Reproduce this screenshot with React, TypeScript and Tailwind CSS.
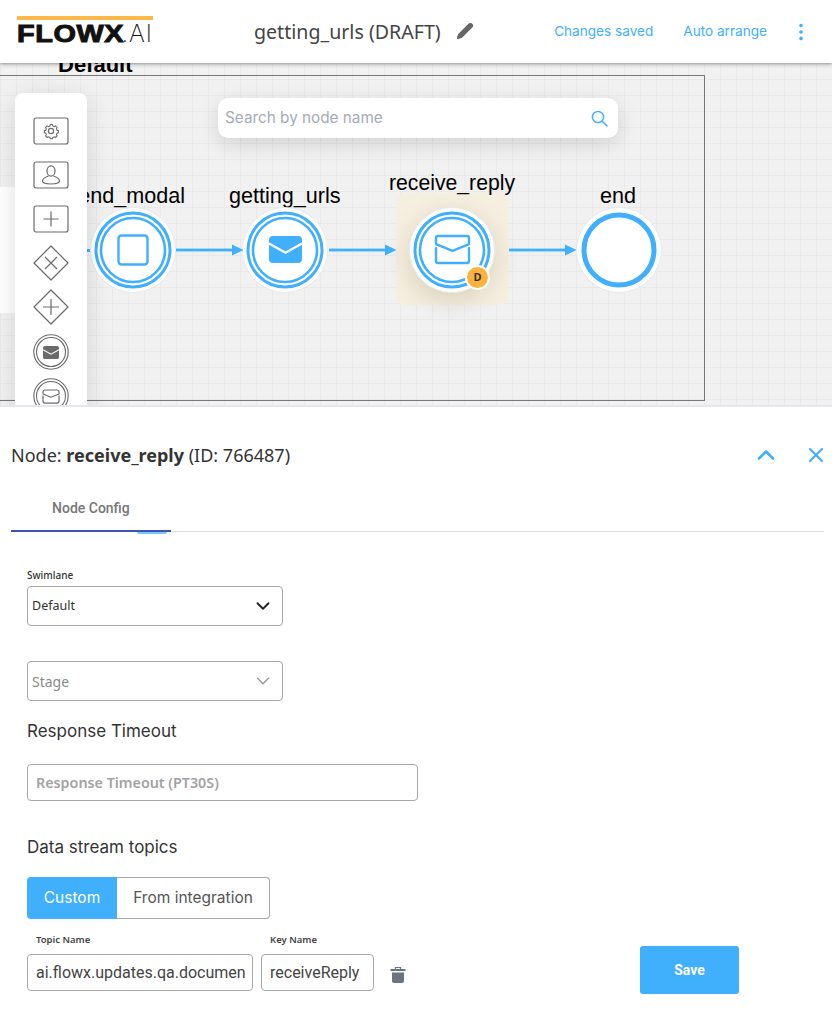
import React from 'react';
import { ChevronDown, ChevronUp, EllipsisVertical, Pencil, X } from 'lucide-react';

const inter = "font-['Inter',sans-serif]";
const noto = "font-['Noto_Sans',sans-serif]";
const roboto = "font-['Roboto',sans-serif]";

const MailFilled = ({ x, y, w, fill }: { x: number; y: number; w: number; fill: string }) => {
    const h = w * 0.82;
    return (
        <g>
            <rect x={x} y={y} width={w} height={h} rx={w * 0.12} fill={fill} />
            <path d={`M${x} ${y + h * 0.28} L${x + w / 2} ${y + h * 0.62} L${x + w} ${y + h * 0.28}`} fill="none" stroke="#fff" strokeWidth={w * 0.07} />
        </g>
    );
};

const MailOutline = ({ x, y, w, stroke, sw }: { x: number; y: number; w: number; stroke: string; sw: number }) => {
    const h = w * 0.82;
    return (
        <g fill="none" stroke={stroke} strokeWidth={sw} strokeLinejoin="round" strokeLinecap="round">
            <path d={`M${x} ${y + h * 0.45} V${y + h - 2} a2 2 0 0 0 2 2 H${x + w - 2} a2 2 0 0 0 2 -2 V${y + h * 0.45}`} />
            <path d={`M${x} ${y + h * 0.3} V${y + 2} a2 2 0 0 1 2 -2 H${x + w - 2} a2 2 0 0 1 2 2 V${y + h * 0.3} L${x + w / 2} ${y + h * 0.55} Z`} />
        </g>
    );
};

const NodeRing = ({ children, single }: { children?: React.ReactNode; single?: boolean }) => (
    <svg width="86" height="86" viewBox="0 0 86 86" className="block">
        <circle cx="43" cy="43" r="42.5" fill="#fff" stroke="#e8e8e8" strokeWidth="1" />
        {single ? (
            <circle cx="43" cy="43" r="35" fill="#fff" stroke="#40affc" strokeWidth="5" />
        ) : (
            <>
                <circle cx="43" cy="43" r="37" fill="none" stroke="#40affc" strokeWidth="3" />
                <circle cx="43" cy="43" r="32" fill="none" stroke="#40affc" strokeWidth="2.6" />
            </>
        )}
        {children}
    </svg>
);

const Arrow = () => (
    <svg width="68" height="14" viewBox="0 0 68 14" className="block">
        <rect x="0" y="5.6" width="57" height="2.8" fill="#40affc" />
        <path d="M56 1.5 L67.5 7 L56 12.5 Z" fill="#40affc" />
    </svg>
);

const Toolbar = () => (
    <div className="absolute left-[15px] top-[30px] w-[72px] h-[330px] bg-white rounded-lg shadow-[0_4px_24px_rgba(0,0,0,0.12)] flex flex-col items-center pt-[24px] z-10">
        <svg width="36" height="28" viewBox="0 0 36 28" fill="none" stroke="#6b6b6b" strokeWidth="1.2" className="shrink-0">
            <rect x="1" y="1" width="34" height="26" rx="2" strokeWidth="1.2" />
            <path d="M18 6.5l1.6.4.5 1.6 1.5.7 1.5-.8 1.7 1.7-.8 1.5.7 1.5 1.5.5v2.4l-1.5.5-.7 1.5.8 1.5-1.7 1.7-1.5-.8-1.5.7-.5 1.5h-2.4l-.5-1.5-1.5-.7-1.5.8-1.7-1.7.8-1.5-.7-1.5-1.5-.5v-2.4l1.5-.5.7-1.5-.8-1.5 1.7-1.7 1.5.8 1.5-.7.5-1.6z" transform="translate(1.8 1.4) scale(.9)" />
            <circle cx="18" cy="14" r="2.6" />
        </svg>
        <svg width="36" height="28" viewBox="0 0 36 28" fill="none" stroke="#6b6b6b" strokeWidth="1.2" className="mt-[16px] shrink-0">
            <rect x="1" y="1" width="34" height="26" rx="2" strokeWidth="1.2" />
            <ellipse cx="18" cy="10" rx="4" ry="5.2" />
            <path d="M15.5 15c-3 1-6 2.5-6 5 0 2 3 3 8.500 3s8.500-1 8.500-3c0-2.500-3-4-6-5" />
        </svg>
        <svg width="36" height="28" viewBox="0 0 36 28" fill="none" stroke="#6b6b6b" strokeWidth="1.2" className="mt-[16px] shrink-0">
            <rect x="1" y="1" width="34" height="26" rx="2" strokeWidth="1.2" />
            <path d="M18 6.500v15M10.500 14h15" />
        </svg>
        <svg width="36" height="36" viewBox="0 0 36 36" fill="none" stroke="#6b6b6b" strokeWidth="1.2" className="mt-[12px] shrink-0">
            <path d="M18 1 L35 18 L18 35 L1 18 Z" strokeLinejoin="round" />
            <path d="M12 12 L24 24 M24 12 L12 24" />
        </svg>
        <svg width="36" height="36" viewBox="0 0 36 36" fill="none" stroke="#6b6b6b" strokeWidth="1.2" className="mt-[8px] shrink-0">
            <path d="M18 1 L35 18 L18 35 L1 18 Z" strokeLinejoin="round" />
            <path d="M18 10 V26 M10 18 H26" />
        </svg>
        <svg width="36" height="36" viewBox="0 0 36 36" className="mt-[9px] shrink-0">
            <circle cx="18" cy="18" r="17.200" fill="none" stroke="#6b6b6b" strokeWidth="1.1" />
            <circle cx="18" cy="18" r="14.500" fill="none" stroke="#6b6b6b" strokeWidth="1.1" />
            <MailFilled x={10} y={12} w={16} fill="#6b6b6b" />
        </svg>
        <svg width="36" height="36" viewBox="0 0 36 36" className="mt-[8px] shrink-0">
            <circle cx="18" cy="18" r="17.200" fill="none" stroke="#6b6b6b" strokeWidth="1.1" />
            <circle cx="18" cy="18" r="14.500" fill="none" stroke="#6b6b6b" strokeWidth="1.1" />
            <MailOutline x={10} y={12} w={16} stroke="#6b6b6b" sw={1.2} />
        </svg>
    </div>
);

const Canvas = () => (
    <div className="relative h-[344px] overflow-hidden bg-[#f1f1f1] bg-[linear-gradient(#e9e9e9_1px,transparent_1px),linear-gradient(90deg,#e9e9e9_1px,transparent_1px)] bg-[length:16px_16px] border-b-2 border-[#e6e6ec] font-['Liberation_Sans',sans-serif] text-black">
        <div className="absolute -left-[10px] top-[12px] w-[715px] h-[326px] border border-[#777]" />
        <div className="absolute left-[58px] -top-[11px] text-[22px] font-bold leading-[26px]">Default</div>
        <div className="absolute left-0 top-[124px] w-[20px] h-[126px] bg-white" />

        <div className="absolute right-[647px] top-[120px] text-[21.6px] leading-[26px] whitespace-nowrap">send_modal</div>

        <Toolbar />

        <div className="absolute left-[218px] top-[35px] w-[400px] h-[40px] bg-white rounded-[10px] shadow-[0_6px_20px_rgba(0,0,0,0.13)] flex items-center justify-between pl-[7px] pr-[10px] z-10">
            <span className={`${inter} text-[15.3px] text-[#a5abb9]`}>Search by node name</span>
            <svg width="17" height="17" viewBox="0 0 17 17" fill="none" stroke="#40affc" strokeWidth="1.5" strokeLinecap="round">
                <circle cx="7" cy="7" r="5.600" />
                <path d="M11 11 L16 16" />
            </svg>
        </div>

        <div className="absolute left-[396px] top-[130px] w-[112px] h-[112px] rounded-[8px] bg-[#f5efe0]" />

        <div className="absolute left-[229px] top-[120px] text-[21.6px] leading-[26px]">getting_urls</div>
        <div className="absolute left-[389px] top-[107px] text-[21.2px] leading-[26px]">receive_reply</div>
        <div className="absolute left-[600px] top-[120px] text-[21.6px] leading-[26px]">end</div>

        <div className="absolute left-[87px] top-[186px] w-[3px] h-[3px] bg-[#40affc]" />

        <div className="absolute left-[90px] top-[144px]">
            <NodeRing>
                <rect x="28.500" y="28.500" width="29" height="29" rx="3" fill="none" stroke="#40affc" strokeWidth="2.400" />
            </NodeRing>
        </div>
        <div className="absolute left-[242px] top-[144px]">
            <NodeRing>
                <MailFilled x={27} y={29} w={33} fill="#40affc" />
            </NodeRing>
        </div>
        <div className="absolute left-[409px] top-[144px] rounded-full shadow-[0_8px_24px_rgba(100,70,20,0.18)]">
            <NodeRing>
                <MailOutline x={27} y={29} w={33} stroke="#40affc" sw={2.400} />
            </NodeRing>
            <div className={`absolute left-[56px] top-[58px] w-[25px] h-[25px] rounded-full bg-[#fdb23c] border-2 border-white flex items-center justify-center text-[11px] font-bold text-[#333] ${noto}`}>D</div>
        </div>
        <div className="absolute left-[576px] top-[144px]">
            <NodeRing single />
        </div>

        <div className="absolute left-[176px] top-[180px]"><Arrow /></div>
        <div className="absolute left-[329px] top-[180px]"><Arrow /></div>
        <div className="absolute left-[509px] top-[180px]"><Arrow /></div>
    </div>
);

const SelectBox = ({ value, muted }: { value: string; muted?: boolean }) => (
    <div className={`w-[256px] h-[40px] border border-[#a8a8a8] rounded-[4px] flex items-center justify-between pl-[4px] pr-[8px] ${noto} ${muted ? 'text-[14px] text-[#8a8a8a]' : 'text-[12.500px] text-[#333]'}`}>
        <span>{value}</span>
        <ChevronDown size={22} strokeWidth={muted ? 1.600 : 2} className={muted ? 'text-[#9a9a9a]' : 'text-[#222]'} />
    </div>
);

export default function App() {
    return (
        <div className="w-[832px] h-[1016px] bg-white overflow-hidden flex flex-col">
            <header className="relative z-20 h-[63px] shrink-0 bg-white shadow-[0_1px_4px_rgba(0,0,0,0.4)] flex items-center">
                <div className="ml-[17px] w-[136px] shrink-0 flex flex-col">
                    <div className="h-[4px] bg-[#fdb848]" />
                    <div className="h-[27px] mt-[1px] flex items-center justify-between text-[#111] font-['Liberation_Sans',sans-serif] leading-none whitespace-nowrap overflow-hidden">
                        <span className="text-[24px] font-black tracking-[0.5px] [-webkit-text-stroke:1px_#111] scale-x-[1.2] origin-left">FLOWX</span>
                        <span className="text-[24px] font-['Inter',sans-serif] font-extralight tracking-[1px]">.AI</span>
                    </div>
                </div>
                <div className={`ml-[101px] flex items-center ${noto} text-[19.6px] text-[#444]`}>
                    <span>getting_urls (DRAFT)</span>
                    <Pencil size={18} fill="#666" strokeWidth={1.500} className="ml-[15px] text-[#666]" />
                </div>
                <div className={`ml-auto flex items-center ${inter} text-[13.6px] text-[#40affc]`}>
                    <span>Changes saved</span>
                    <span className="ml-[30px]">Auto arrange</span>
                    <EllipsisVertical size={22} strokeWidth={2} className="ml-[23px] mr-[20px]" />
                </div>
            </header>

            <Canvas />

            <div className="flex-1 bg-white relative">
                <div className="flex items-center h-[30px] mt-[33px] pl-[11px]">
                    <div className={`${noto} text-[18px] text-[#333]`}>
                        Node: <span className="font-bold">receive_reply</span> (ID: 766487)
                    </div>
                    <ChevronUp size={28} strokeWidth={2.200} className="ml-auto text-[#40affc]" />
                    <X size={24} strokeWidth={2.200} className="ml-[24px] mr-[4px] text-[#40affc]" />
                </div>

                <div className="relative ml-[11px] mr-[8px] mt-[15px] h-[47px] border-b border-[#dedede]">
                    <div className={`w-[160px] h-[47px] border-b-2 border-[#3f51b5] ${roboto} text-[14px] font-medium text-[#777] pl-[41px] pt-[13px]`}>
                        Node Config
                    </div>
                    <div className="absolute left-[126px] top-[47px] w-[30px] h-[2px] rounded-b-full bg-[#7cc8fd]" />
                </div>

                <div className="pl-[27px] pt-[36px] flex flex-col items-start">
                    <label className={`${noto} text-[10px] font-medium text-[#333] leading-[14px]`}>Swimlane</label>
                    <div className="mt-[4px]"><SelectBox value="Default" /></div>
                    <div className="mt-[35px]"><SelectBox value="Stage" muted /></div>
                    <h3 className={`${inter} mt-[18px] text-[17px] leading-[24px] text-[#333]`}>Response Timeout</h3>
                    <div className={`mt-[21px] w-[391px] h-[37px] border border-[#a8a8a8] rounded-[4px] flex items-center pl-[8px] ${noto} text-[14.3px] font-semibold text-[#a3a3a3]`}>
                        Response Timeout (PT30S)
                    </div>
                    <h3 className={`${inter} mt-[34px] text-[17px] leading-[24px] text-[#333]`}>Data stream topics</h3>
                    <div className={`mt-[18px] flex h-[42px] ${inter} text-[15.500px]`}>
                        <div className="w-[90px] bg-[#40affc] text-white rounded-l-[4px] flex items-center justify-center">Custom</div>
                        <div className="w-[153px] border border-l-0 border-[#a8a8a8] rounded-r-[4px] text-[#555] flex items-center justify-center">From integration</div>
                    </div>
                    <div className="mt-[14px] flex items-end">
                        <div className="w-[226px]">
                            <label className={`${noto} block pl-[9px] text-[9.500px] font-semibold text-[#444] leading-[14px]`}>Topic Name</label>
                            <input
                                readOnly
                                value="ai.flowx.updates.qa.document.persist.v1"
                                className={`mt-[7px] w-full h-[37px] border border-[#a8a8a8] rounded-[4px] pl-[8px] pr-[7px] outline-none ${roboto} text-[16px] text-[#444]`}
                            />
                        </div>
                        <div className="w-[113px] ml-[8px]">
                            <label className={`${noto} block pl-[9px] text-[9.500px] font-semibold text-[#444] leading-[14px]`}>Key Name</label>
                            <input
                                readOnly
                                value="receiveReply"
                                className={`mt-[7px] w-full h-[37px] border border-[#a8a8a8] rounded-[4px] pl-[8px] outline-none ${roboto} text-[16px] text-[#444]`}
                            />
                        </div>
                        <svg width="18" height="18" viewBox="0 0 18 18" className="ml-[15px] mb-[7px]" fill="#6b7280">
                            <rect x="1.500" y="3" width="15" height="2" rx="0.500" />
                            <path d="M6.500 3 V1.500 H11.500 V3" fill="none" stroke="#6b7280" strokeWidth="1.200" />
                            <path d="M3 6.500 H15 V15 a2 2 0 0 1 -2 2 H5 a2 2 0 0 1 -2 -2 Z" />
                        </svg>
                        <button className={`ml-[233px] mb-[-3px] w-[99px] h-[48px] bg-[#40affc] text-white rounded-[3px] ${roboto} text-[14px] font-bold`}>Save</button>
                    </div>
                </div>
            </div>
        </div>
    );
}
